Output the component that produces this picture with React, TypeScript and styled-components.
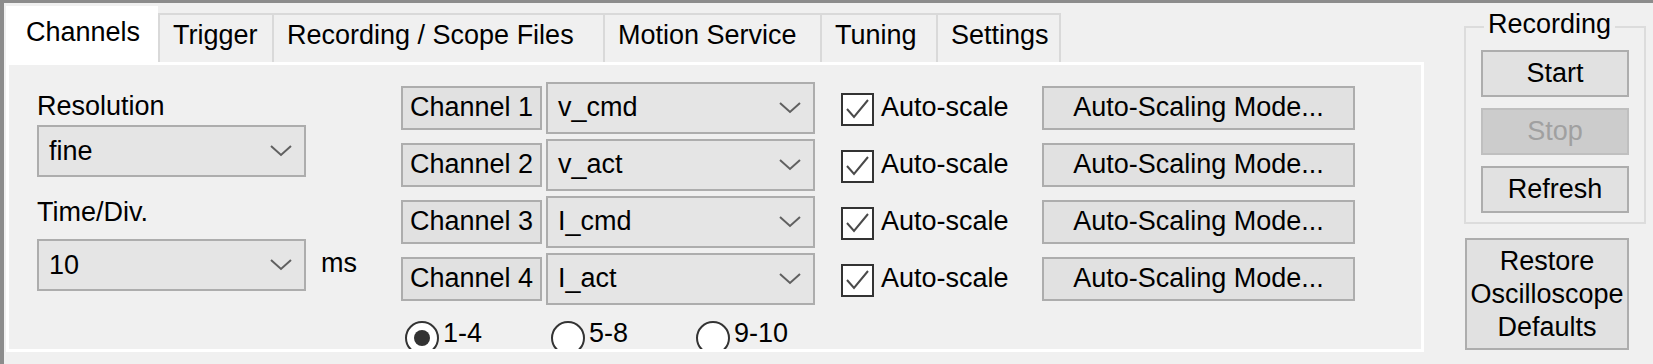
import styled, { createGlobalStyle } from 'styled-components';

const GlobalStyle = createGlobalStyle`
  html, body {
    margin: 0;
    padding: 0;
    background: #f0f0f0;
  }
  body {
    font-family: "Liberation Sans", Arial, sans-serif;
    font-size: 27px;
    color: #000;
  }
`;

const tabs = [
  { label: 'Channels', width: 152 },
  { label: 'Trigger', width: 114 },
  { label: 'Recording / Scope Files', width: 331 },
  { label: 'Motion Service', width: 217 },
  { label: 'Tuning', width: 116 },
  { label: 'Settings', width: 125 },
];

const channels = [
  { name: 'Channel 1', signal: 'v_cmd' },
  { name: 'Channel 2', signal: 'v_act' },
  { name: 'Channel 3', signal: 'I_cmd' },
  { name: 'Channel 4', signal: 'I_act' },
];

const ranges = [
  { label: '1-4', width: 146, checked: true },
  { label: '5-8', width: 145, checked: false },
  { label: '9-10', width: 120, checked: false },
];

const Chevron = () => (
  <svg width="22" height="12" viewBox="0 0 22 12">
    <polyline points="1,1 11,10 21,1" fill="none" stroke="#606060" strokeWidth="2" />
  </svg>
);

const App = () => {
  return (
    <>
      <GlobalStyle />
      <Window>
        <TabControl>
          <TabStrip>
            {tabs.map((t, i) => (
              <Tab key={t.label} $w={t.width} $active={i === 0}>
                {t.label}
              </Tab>
            ))}
          </TabStrip>
          <TabPage>
            {/* resolution / time base */}
            <LeftCol>
              <FieldLabel $top={0}>Resolution</FieldLabel>
              <Combo $top={3} $w={269}>
                fine
                <Chevron />
              </Combo>
              <FieldLabel $top={20}>Time/Div.</FieldLabel>
              <TimeRow>
                <Combo $top={0} $w={269}>
                  10
                  <Chevron />
                </Combo>
                <Unit>ms</Unit>
              </TimeRow>
            </LeftCol>

            {/* channel rows */}
            <ChannelArea>
              {channels.map((c) => (
                <ChannelRow key={c.name}>
                  <WinButton $w={141} $h={44}>{c.name}</WinButton>
                  <Combo $top={0} $w={269} $left={4}>
                    {c.signal}
                    <Chevron />
                  </Combo>
                  <AutoCheck>
                    <CheckBox>
                      <svg width="29" height="29" viewBox="0 0 29 29">
                        <polyline points="4,14 11,22 25,5" fill="none" stroke="#4a4a4a" strokeWidth="2" />
                      </svg>
                    </CheckBox>
                    Auto-scale
                  </AutoCheck>
                  <WinButton $w={313} $h={44}>Auto-Scaling Mode...</WinButton>
                </ChannelRow>
              ))}
              <RadioRow>
                {ranges.map((r) => (
                  <RadioItem key={r.label} $w={r.width}>
                    <RadioCircle>{r.checked && <RadioDot />}</RadioCircle>
                    {r.label}
                  </RadioItem>
                ))}
              </RadioRow>
            </ChannelArea>
          </TabPage>
        </TabControl>

        <SidePanel>
          <GroupBox>
            <GroupTitle>Recording</GroupTitle>
            <WinButton $w={148} $h={47}>Start</WinButton>
            <WinButton $w={148} $h={47} disabled>
              Stop
            </WinButton>
            <WinButton $w={148} $h={47}>Refresh</WinButton>
          </GroupBox>
          <RestoreButton $w={164} $h={112}>
            Restore
            <br />
            Oscilloscope
            <br />
            Defaults
          </RestoreButton>
        </SidePanel>
      </Window>
    </>
  );
};

export default App;

// window frame

const Window = styled.div`
  display: flex;
  align-items: flex-start;
  width: 1653px;
  height: 364px;
  box-sizing: border-box;
  border-top: 3px solid #8c8c8c;
  border-left: 4px solid #8c8c8c;
  background: #f0f0f0;
  overflow: hidden;
`;

// tab control

const TabControl = styled.div`
  display: flex;
  flex-direction: column;
  flex: none;
  width: 1418px;
  margin: 3px 0 0 2px;
`;

const TabStrip = styled.div`
  display: flex;
  align-items: flex-end;
  height: 56px;
`;

const Tab = styled.div<{ $w: number; $active?: boolean }>`
  box-sizing: border-box;
  display: flex;
  align-items: center;
  width: ${(p) => p.$w}px;
  height: ${(p) => (p.$active ? 56 : 49)}px;
  padding: 0 0 6px ${(p) => (p.$active ? 18 : 13)}px;
  background: ${(p) => (p.$active ? '#ffffff' : '#f0f0f0')};
  border-top: 2px solid ${(p) => (p.$active ? '#ffffff' : '#d9d9d9')};
  border-left: 2px solid ${(p) => (p.$active ? '#ffffff' : '#d9d9d9')};
  line-height: 31px;
  white-space: nowrap;
  &:last-child {
    border-right: 2px solid #d9d9d9;
  }
`;

const TabPage = styled.div`
  box-sizing: border-box;
  display: flex;
  align-items: flex-start;
  height: 290px;
  border: 3px solid #ffffff;
  background: #f0f0f0;
  overflow: hidden;
`;

// left column

const LeftCol = styled.div`
  box-sizing: border-box;
  display: flex;
  flex-direction: column;
  flex: none;
  width: 392px;
  padding: 26px 0 0 28px;
`;

const FieldLabel = styled.div<{ $top: number }>`
  margin-top: ${(p) => p.$top}px;
  line-height: 31px;
`;

const Combo = styled.div<{ $w: number; $top: number; $left?: number }>`
  box-sizing: border-box;
  display: flex;
  align-items: center;
  justify-content: space-between;
  flex: none;
  width: ${(p) => p.$w}px;
  height: 52px;
  margin-top: ${(p) => p.$top}px;
  margin-left: ${(p) => p.$left || 0}px;
  padding: 0 12px 0 10px;
  background: #e5e5e5;
  border: 2px solid #adadad;
  line-height: 31px;
`;

const TimeRow = styled.div`
  display: flex;
  align-items: flex-start;
  gap: 15px;
  margin-top: 11px;
`;

const Unit = styled.div`
  margin-top: 9px;
  line-height: 31px;
`;

// channel rows

const ChannelArea = styled.div`
  display: flex;
  flex-direction: column;
  padding-top: 14px;
`;

const ChannelRow = styled.div`
  display: flex;
  align-items: center;
  height: 57px;
`;

const WinButton = styled.button<{ $w: number; $h: number }>`
  box-sizing: border-box;
  flex: none;
  width: ${(p) => p.$w}px;
  height: ${(p) => p.$h}px;
  padding: 0;
  font: inherit;
  line-height: 31px;
  color: #000;
  background: #e1e1e1;
  border: 2px solid #adadad;
  border-radius: 0;
  white-space: nowrap;
  &:disabled {
    background: #cccccc;
    border-color: #bfbfbf;
    color: #a0a0a0;
  }
`;

const AutoCheck = styled.label`
  display: flex;
  align-items: center;
  gap: 7px;
  flex: none;
  width: 175px;
  margin: 0 26px;
  line-height: 31px;
`;

const CheckBox = styled.span`
  box-sizing: border-box;
  display: flex;
  align-items: center;
  justify-content: center;
  width: 33px;
  height: 33px;
  margin-top: 4px;
  background: #ffffff;
  border: 2px solid #333333;
`;

const RadioRow = styled.div`
  display: flex;
  margin-top: 11px;
  padding-left: 4px;
`;

const RadioItem = styled.label<{ $w: number }>`
  display: flex;
  align-items: flex-start;
  gap: 4px;
  width: ${(p) => p.$w}px;
  line-height: 31px;
`;

const RadioCircle = styled.span`
  box-sizing: border-box;
  display: flex;
  align-items: center;
  justify-content: center;
  width: 34px;
  height: 34px;
  margin-top: 3px;
  border: 2px solid #333333;
  border-radius: 50%;
  background: #ffffff;
`;

const RadioDot = styled.span`
  width: 16px;
  height: 16px;
  border-radius: 50%;
  background: #333333;
`;

// right side

const SidePanel = styled.div`
  display: flex;
  flex-direction: column;
  flex: none;
  width: 182px;
  margin: 6px 0 0 40px;
`;

const GroupBox = styled.fieldset`
  display: flex;
  flex-direction: column;
  gap: 11px;
  min-width: 0;
  margin: 0;
  padding: 5px 15px 9px;
  border: 2px solid #dcdcdc;
`;

const GroupTitle = styled.legend`
  margin-left: 3px;
  padding: 0 4px 6px;
  line-height: 30px;
`;

const RestoreButton = styled(WinButton)`
  margin: 14px 0 0 1px;
  line-height: 33px;
`;
